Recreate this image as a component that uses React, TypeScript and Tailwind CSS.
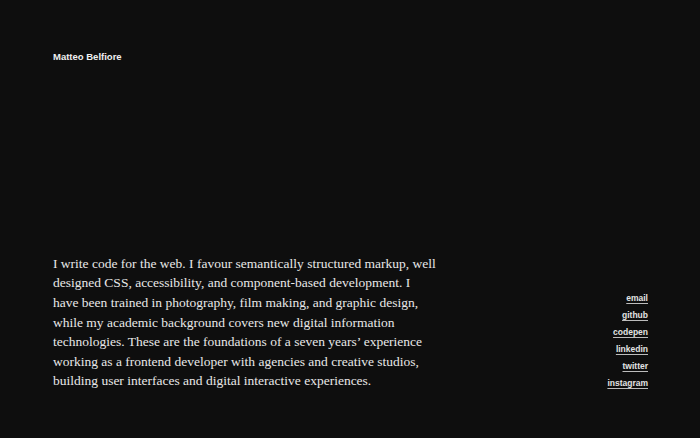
import React from 'react';

const links = ['email', 'github', 'codepen', 'linkedin', 'twitter', 'instagram'];

const lines = [
  'I write code for the web. I favour semantically structured markup, well',
  'designed CSS, accessibility, and component-based development. I',
  'have been trained in photography, film making, and graphic design,',
  'while my academic background covers new digital information',
  'technologies. These are the foundations of a seven years’ experience',
  'working as a frontend developer with agencies and creative studios,',
  'building user interfaces and digital interactive experiences.',
];

const App: React.FC = () => {
  return (
    <div className="h-[438px] w-full bg-[#0e0e0e] text-[#e6e6e6] flex flex-col justify-between pl-[53px] pr-[52px] pt-[51px] pb-[47px]">
      <header>
        <h1
          className="text-[9.5px] font-bold leading-[11px] text-[#f0f0f0]"
          style={{ fontFamily: '"Liberation Sans", Arial, sans-serif' }}
        >
          Matteo Belfiore
        </h1>
      </header>

      <main className="flex items-end justify-between">
        <p
          className="text-[13.5px] leading-[19.6px] text-[#e8e8e8] whitespace-nowrap"
          style={{ fontFamily: '"Liberation Serif", "Times New Roman", serif' }}
        >
          {lines.map((line, i) => (
            <React.Fragment key={i}>
              {line}
              {i < lines.length - 1 && <br />}
            </React.Fragment>
          ))}
        </p>

        <ul
          className="flex flex-col items-end text-[8.5px] leading-[17px] -mb-px"
          style={{ fontFamily: '"Liberation Sans", Arial, sans-serif' }}
        >
          {links.map((link) => (
            <li key={link}>
              <a
                href="#"
                className="font-bold text-[#e4e4e4] underline decoration-[#bdbdbd] underline-offset-2"
              >
                {link}
              </a>
            </li>
          ))}
        </ul>
      </main>
    </div>
  );
};

export default App;
